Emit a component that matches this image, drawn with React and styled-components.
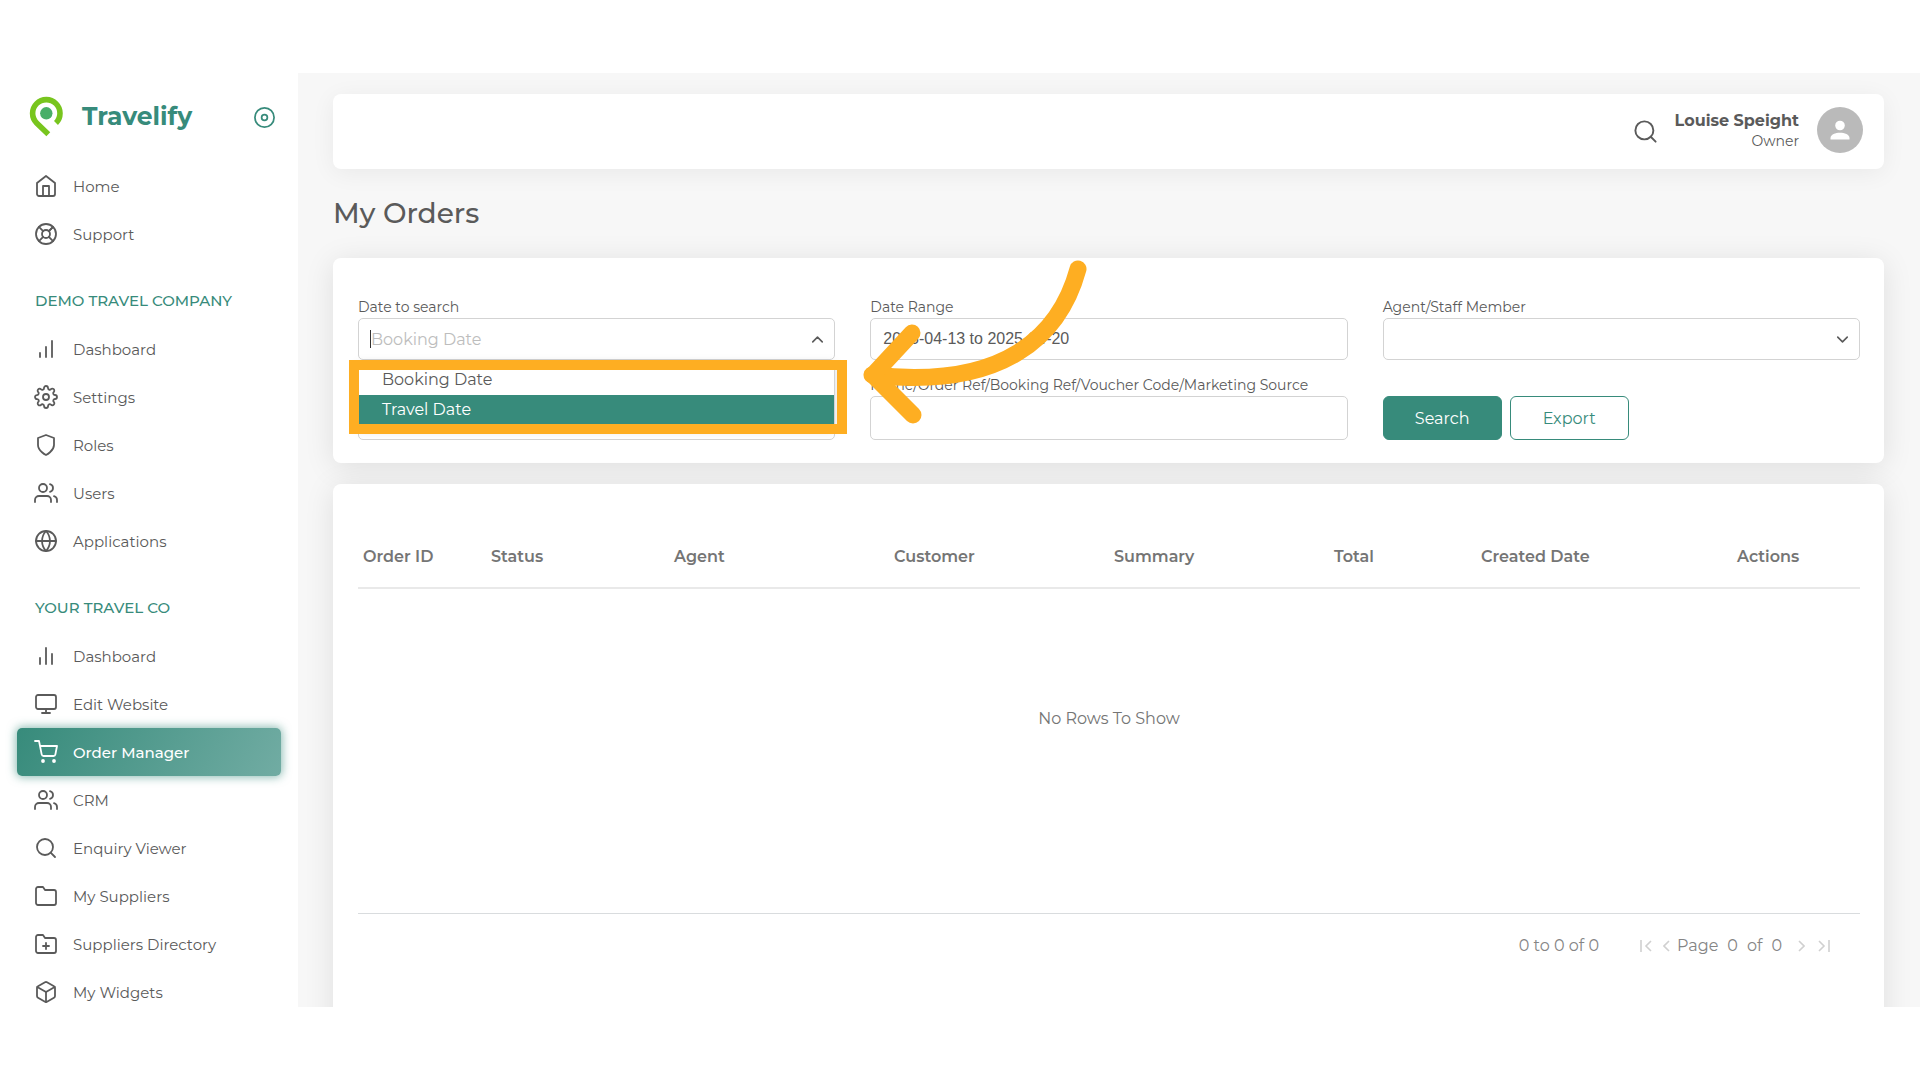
import React from 'react';
import styled, { createGlobalStyle } from 'styled-components';
import {
  FiBarChart,
  FiBarChart2,
  FiBox,
  FiChevronDown,
  FiChevronUp,
  FiDisc,
  FiFolder,
  FiFolderPlus,
  FiGlobe,
  FiHome,
  FiLifeBuoy,
  FiMonitor,
  FiSearch,
  FiSettings,
  FiShield,
  FiShoppingCart,
  FiUsers,
} from 'react-icons/fi';

const GlobalStyle = createGlobalStyle`
  * {
    box-sizing: border-box;
  }

  body {
    margin: 0;
    background-color: #fff;
    color: #5a5a5a;
    font-family: Montserrat, Inter, sans-serif;
    font-size: 16px;
  }

  button, input, select {
    font-family: inherit;
    font-size: 16px;
    color: inherit;
  }
`;

const Page = styled.div`
  height: 100vh;
  padding: 73px 0;
`;

const Frame = styled.div`
  display: flex;
  height: 100%;
  overflow: hidden;
`;

const Sidebar = styled.aside`
  flex: 0 0 298px;
  background-color: #fff;
`;

const Brand = styled.div`
  display: flex;
  align-items: center;
  height: 89px;
  padding: 0 22px 4px 29px;
`;

const BrandName = styled.a`
  flex: 1;
  margin-left: 18px;
  color: #378b7b;
  font-size: 25px;
  font-weight: 700;
  line-height: 32px;
  text-decoration: none;
`;

const PinButton = styled.button`
  display: flex;
  padding: 4px 0 0;
  border: none;
  background: none;
  color: #378b7b;
`;

const Section = styled.h2`
  margin: 0;
  padding: 33px 35px 14px;
  color: #378b7b;
  font-size: 15px;
  font-weight: 500;
  line-height: 20px;
`;

const NavList = styled.ul`
  margin: 0;
  padding: 0 17px;
  list-style: none;
`;

const NavLink = styled.a`
  display: flex;
  align-items: center;
  gap: 15px;
  height: 48px;
  padding-left: 17px;
  border-radius: 5px;
  color: ${({ $active }) => ($active ? '#fff' : '#5a5a5a')};
  background: ${({ $active }) => ($active ? 'linear-gradient(118deg, #378b7b, #71aca3)' : 'none')};
  box-shadow: ${({ $active }) => ($active ? '0 0 10px 1px rgba(55, 139, 123, 0.6)' : 'none')};
  font-size: 15px;
  font-weight: ${({ $active }) => ($active ? 500 : 400)};
  text-decoration: none;
`;

const Main = styled.main`
  display: flex;
  flex: 1;
  flex-direction: column;
  min-width: 0;
  padding: 21px 36px 0 35px;
  overflow: hidden;
  background-color: #f7f7f7;
`;

const TopBar = styled.header`
  display: flex;
  flex: none;
  align-items: center;
  justify-content: flex-end;
  height: 75px;
  padding: 0 21px 4px;
  border-radius: 8px;
  background-color: #fff;
  box-shadow: 0 4px 24px rgba(0, 0, 0, 0.06);
`;

const IconButton = styled.button`
  display: flex;
  padding: 4px 0 0;
  border: none;
  background: none;
`;

const UserInfo = styled.div`
  margin: 0 18px 0 16px;
  padding-top: 3px;
  text-align: right;
  line-height: 21px;
`;

const UserName = styled.div`
  font-weight: 700;
`;

const UserRole = styled.div`
  font-size: 14px;
`;

const Title = styled.h1`
  flex: none;
  margin: 27px 0;
  font-size: 28px;
  font-weight: 500;
  line-height: 35px;
`;

const Card = styled.section`
  position: relative;
  flex: none;
  padding: ${({ $padding }) => $padding};
  border-radius: 8px;
  background-color: #fff;
  box-shadow: 0 4px 30px rgba(0, 0, 0, 0.1);

  & + & {
    margin-top: 21px;
  }
`;

const Filters = styled.form`
  display: grid;
  grid-template-columns: repeat(3, 1fr);
  gap: 15px 35px;
  align-items: end;
`;

const Field = styled.div`
  display: flex;
  flex-direction: column;
  gap: 1px;
`;

const Label = styled.label`
  font-size: 14px;
  line-height: 20px;
`;

const Control = styled.div`
  position: relative;
  display: grid;
  align-items: center;
`;

const Input = styled.input`
  width: 100%;
  height: ${({ $tall }) => ($tall ? 44 : 42)}px;
  padding: 0 12px;
  border: 1px solid #d3d3d3;
  border-radius: 5px;
  background-color: #fff;
  outline: none;

  &::placeholder {
    color: #bdbdbd;
    opacity: 1;
  }
`;

const DateInput = styled(Input)`
  font-family: "Liberation Sans", Arial, sans-serif;
`;

const Select = styled(Input).attrs({ as: 'select' })`
  appearance: none;
`;

const Arrow = styled.span`
  position: absolute;
  right: 8px;
  display: flex;
  pointer-events: none;
`;

const Caret = styled.span`
  position: absolute;
  left: 12px;
  width: 1px;
  height: 18px;
  background-color: #333;
`;

const Menu = styled.ul`
  position: absolute;
  z-index: 1;
  top: 100%;
  left: 0;
  right: 0;
  margin: 0;
  padding: 5px 0 0;
  border: 1px solid #d3d3d3;
  border-top: none;
  background-color: #fff;
  box-shadow: 0 4px 10px rgba(0, 0, 0, 0.15);
  list-style: none;
`;

const Option = styled.li`
  padding: 0 23px;
  color: ${({ $active }) => ($active ? '#fff' : 'inherit')};
  background-color: ${({ $active }) => ($active ? '#378b7b' : '#fff')};
  line-height: 30px;
`;

// outline drawn round the open menu
const Highlight = styled.div`
  position: absolute;
  z-index: 2;
  top: 42px;
  left: -9px;
  right: -12px;
  height: 74px;
  border: 10px solid #feae22;
  pointer-events: none;
`;

const Pointer = styled.svg`
  position: absolute;
  z-index: 3;
  top: 0;
  left: 528px;
  overflow: visible;
  pointer-events: none;
`;

const Buttons = styled.div`
  display: flex;
  gap: 8px;
`;

const Button = styled.button`
  width: 119px;
  height: 44px;
  border: 1px solid #378b7b;
  border-radius: 6px;
  color: ${({ $outline }) => ($outline ? '#378b7b' : '#fff')};
  background-color: ${({ $outline }) => ($outline ? '#fff' : '#378b7b')};
`;

const Table = styled.table`
  width: 100%;
  table-layout: fixed;
  border-collapse: collapse;
  color: #757575;
`;

const HeadCell = styled.th`
  width: ${({ $width }) => $width}px;
  height: 64px;
  padding: 2px 5px 0;
  border-bottom: 2px solid #e9e9e9;
  font-weight: 600;
  text-align: left;
`;

const EmptyCell = styled.td`
  height: 325px;
  padding: 0 0 64px;
  border-bottom: 1px solid #d9dcde;
  text-align: center;
`;

const Pagination = styled.div`
  display: flex;
  align-items: center;
  justify-content: flex-end;
  padding: 20px 30px 0 0;
  color: #858585;
  line-height: 24px;
`;

const PageText = styled.span`
  display: flex;
  gap: 9px;
  margin: 0 16px 0 7px;
`;

const PageButton = styled.button`
  display: flex;
  margin-left: ${({ $space }) => $space || 0}px;
  padding: 0;
  border: none;
  background: none;
  color: #d0d0d0;
`;

const topLinks = [
  { label: 'Home', icon: FiHome },
  { label: 'Support', icon: FiLifeBuoy },
];

const companyLinks = [
  { label: 'Dashboard', icon: FiBarChart },
  { label: 'Settings', icon: FiSettings },
  { label: 'Roles', icon: FiShield },
  { label: 'Users', icon: FiUsers },
  { label: 'Applications', icon: FiGlobe },
];

const travelLinks = [
  { label: 'Dashboard', icon: FiBarChart2 },
  { label: 'Edit Website', icon: FiMonitor },
  { label: 'Order Manager', icon: FiShoppingCart, active: true },
  { label: 'CRM', icon: FiUsers },
  { label: 'Enquiry Viewer', icon: FiSearch },
  { label: 'My Suppliers', icon: FiFolder },
  { label: 'Suppliers Directory', icon: FiFolderPlus },
  { label: 'My Widgets', icon: FiBox },
];

const columns = [
  { name: 'Order ID', width: 128 },
  { name: 'Status', width: 183 },
  { name: 'Agent', width: 220 },
  { name: 'Customer', width: 220 },
  { name: 'Summary', width: 220 },
  { name: 'Total', width: 147 },
  { name: 'Created Date', width: 256 },
  { name: 'Actions', width: 128 },
];

const Logo = () => (
  <svg width="35" height="42" viewBox="0 0 35 42" fill="none">
    <path d="M27 28 A13.7 13.7 0 1 0 7.6 28 L19.3 39.3" stroke="#78c51e" strokeWidth="5.6" />
    <circle cx="17.3" cy="18.3" r="6.2" fill="#48ae68" />
  </svg>
);

const Avatar = () => (
  <svg width="46" height="46" viewBox="0 0 46 46">
    <circle cx="23" cy="23" r="23" fill="#bababa" />
    <circle cx="23" cy="18.5" r="4.8" fill="#fff" />
    <path d="M13.5 32.5 v-1.5 c0-3.5 5-5.3 9.5-5.3 s9.5 1.8 9.5 5.3 v1.5 z" fill="#fff" />
  </svg>
);

const PageIcon = ({ d, width }) => (
  <svg width={width} height="12" viewBox={`0 0 ${width} 12`} fill="none" stroke="currentColor" strokeWidth="1.6">
    <path d={d} />
  </svg>
);

const Nav = ({ links }) => (
  <NavList>
    {links.map(({ label, icon: Icon, active }) => (
      <li key={label}>
        <NavLink href="#" $active={active}>
          <Icon size={24} strokeWidth={1.8} />
          {label}
        </NavLink>
      </li>
    ))}
  </NavList>
);

const App = () => (
  <>
    <GlobalStyle />
    <Page>
      <Frame>
        <Sidebar>
          <Brand>
            <Logo />
            <BrandName href="#">Travelify</BrandName>
            <PinButton aria-label="Toggle menu">
              <FiDisc size={23} strokeWidth={1.8} />
            </PinButton>
          </Brand>
          <Nav links={topLinks} />
          <Section>DEMO TRAVEL COMPANY</Section>
          <Nav links={companyLinks} />
          <Section>YOUR TRAVEL CO</Section>
          <Nav links={travelLinks} />
        </Sidebar>

        <Main>
          <TopBar>
            <IconButton aria-label="Search">
              <FiSearch size={27} strokeWidth={1.7} />
            </IconButton>
            <UserInfo>
              <UserName>Louise Speight</UserName>
              <UserRole>Owner</UserRole>
            </UserInfo>
            <Avatar />
          </TopBar>

          <Title>My Orders</Title>

          <Card $padding="39px 24px 23px 25px">
            <Filters>
              <Field>
                <Label htmlFor="date-type">Date to search</Label>
                <Control>
                  <Input id="date-type" role="combobox" aria-expanded="true" aria-controls="date-menu" placeholder="Booking Date" />
                  <Caret />
                  <Arrow>
                    <FiChevronUp size={19} />
                  </Arrow>
                  <Menu id="date-menu" role="listbox">
                    <Option role="option">Booking Date</Option>
                    <Option role="option" $active>Travel Date</Option>
                  </Menu>
                  <Highlight />
                </Control>
              </Field>
              <Field>
                <Label htmlFor="date-range">Date Range</Label>
                <DateInput id="date-range" defaultValue="2025-04-13 to 2025-04-20" />
              </Field>
              <Field>
                <Label htmlFor="agent">Agent/Staff Member</Label>
                <Control>
                  <Select id="agent" />
                  <Arrow>
                    <FiChevronDown size={19} />
                  </Arrow>
                </Control>
              </Field>
              <Select aria-label="Status" $tall />
              <Field>
                <Label htmlFor="reference">Name/Order Ref/Booking Ref/Voucher Code/Marketing Source</Label>
                <Input id="reference" $tall />
              </Field>
              <Buttons>
                <Button type="button">Search</Button>
                <Button type="button" $outline>Export</Button>
              </Buttons>
            </Filters>
            <Pointer width="226" height="170" viewBox="0 0 226 170" fill="none" stroke="#feae22" strokeWidth="17" strokeLinecap="round" strokeLinejoin="round">
              <path d="M217 11 C199 77 144 132 11 117" />
              <path d="M51 75 L12 117 L52 157" />
            </Pointer>
          </Card>

          <Card $padding="40px 24px 80px 25px">
            <Table>
              <thead>
                <tr>
                  {columns.map(({ name, width }) => (
                    <HeadCell key={name} $width={width}>{name}</HeadCell>
                  ))}
                </tr>
              </thead>
              <tbody>
                <tr>
                  <EmptyCell colSpan={columns.length}>No Rows To Show</EmptyCell>
                </tr>
              </tbody>
            </Table>
            <Pagination>
              <span>0 to 0 of 0</span>
              <PageButton aria-label="First page" $space={41}>
                <PageIcon width={12} d="M1 0 V12 M11 1 L6 6 L11 11" />
              </PageButton>
              <PageButton aria-label="Previous page" $space={11}>
                <PageIcon width={7} d="M6 1 L1 6 L6 11" />
              </PageButton>
              <PageText>
                <span>Page</span>
                <span>0</span>
                <span>of</span>
                <span>0</span>
              </PageText>
              <PageButton aria-label="Next page">
                <PageIcon width={7} d="M1 1 L6 6 L1 11" />
              </PageButton>
              <PageButton aria-label="Last page" $space={13}>
                <PageIcon width={12} d="M1 1 L6 6 L1 11 M11 0 V12" />
              </PageButton>
            </Pagination>
          </Card>
        </Main>
      </Frame>
    </Page>
  </>
);

export default App;
